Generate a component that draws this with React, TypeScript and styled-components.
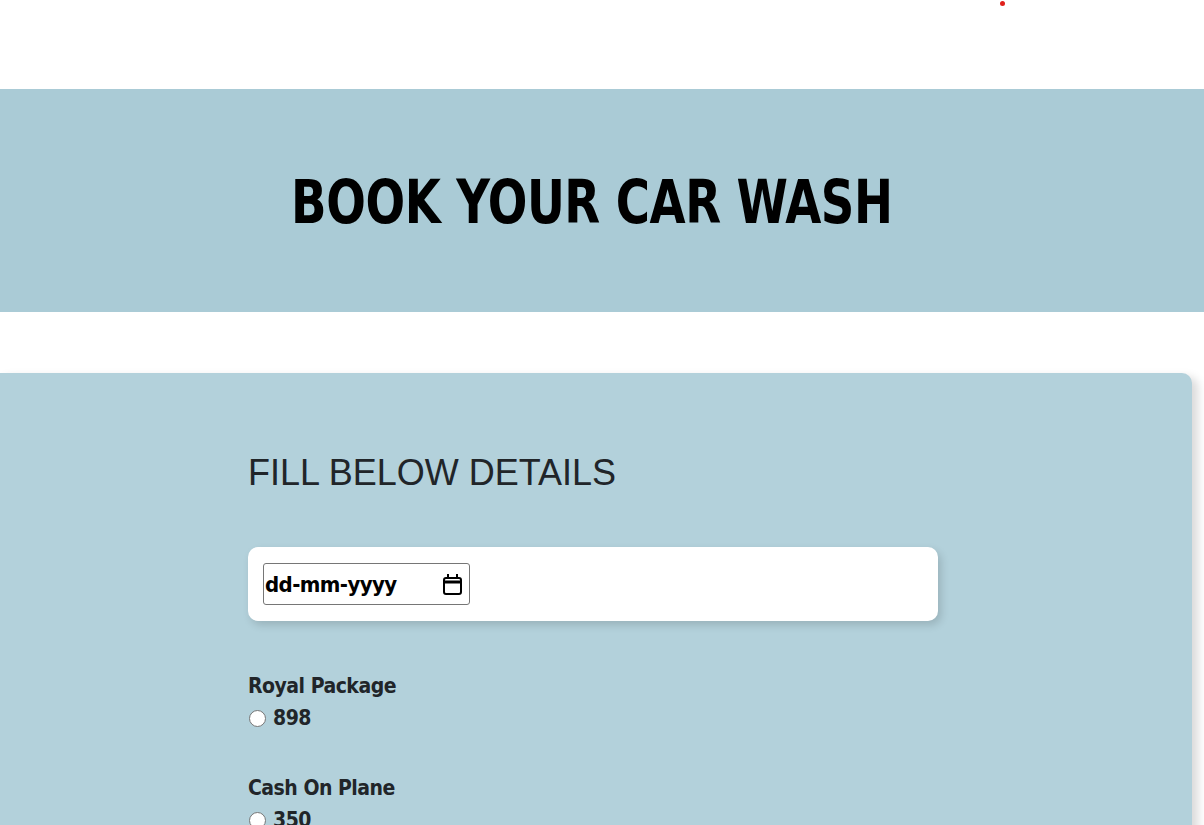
import React from "react";
import styled, { createGlobalStyle } from "styled-components";

const Global = createGlobalStyle`
  html, body { margin: 0; padding: 0; background: #fff; }
  body { font-family: "DejaVu Sans Condensed", "DejaVu Sans", sans-serif; overflow: hidden; }
`;

const TopBar = styled.div`
  height: 89px;
  display: flex;
  justify-content: flex-end;
  align-items: flex-start;
  padding-right: 199px;
  box-sizing: border-box;
`;

const Dot = styled.span`
  width: 5px;
  height: 5px;
  border-radius: 50%;
  background: #e0201b;
  margin-top: 1px;
`;

const Banner = styled.header`
  height: 223px;
  background: #aacbd6;
  display: flex;
  align-items: center;
  justify-content: center;
  padding-right: 20px;
`;

const Title = styled.h1`
  margin: 0;
  font-family: "DejaVu Sans Condensed", "DejaVu Sans", sans-serif;
  font-weight: 700;
  font-size: 61px;
  color: #000;
  letter-spacing: -0.5px;
  transform: scaleX(0.85);
  padding-top: 2px;
`;

const Panel = styled.section`
  margin-top: 61px;
  width: 1192px;
  min-height: 600px;
  background: #b3d1db;
  border-radius: 0 10px 0 0;
  box-shadow: 6px 4px 10px rgba(0, 0, 0, 0.15);
  padding: 78px 0 0 248px;
  box-sizing: border-box;
`;

const SubTitle = styled.h2`
  margin: 0 0 53px;
  font-family: "Liberation Sans", Arial, sans-serif;
  font-weight: 400;
  font-size: 36px;
  line-height: 43px;
  color: #212529;
`;

const Card = styled.div`
  width: 690px;
  height: 74px;
  box-sizing: border-box;
  padding: 15px;
  background: #fff;
  border-radius: 10px;
  box-shadow: 3px 4px 8px rgba(0, 0, 0, 0.15);
  display: flex;
  align-items: center;
`;

const DateBox = styled.div`
  width: 207px;
  height: 42px;
  box-sizing: border-box;
  border: 1px solid #767676;
  border-radius: 3px;
  display: flex;
  align-items: center;
  justify-content: space-between;
  padding: 0 7px 0 1px;
  font-family: "DejaVu Sans Condensed", "DejaVu Sans", sans-serif;
  font-weight: 700;
  font-size: 22px;
  letter-spacing: -0.6px;
  color: #000;
`;

const Group = styled.div`
  margin-top: 52px;
  color: #212529;
  font-family: "DejaVu Sans Condensed", "DejaVu Sans", sans-serif;
  font-weight: 700;
  font-size: 21px;
  line-height: 26px;
  letter-spacing: -0.5px;
  & + & { margin-top: 44px; }
`;

const OptionRow = styled.label`
  display: flex;
  align-items: center;
  gap: 7px;
  margin-top: 6px;
`;

const Radio = styled.span`
  width: 17px;
  height: 17px;
  box-sizing: border-box;
  border-radius: 50%;
  border: 1px solid #767676;
  background: #fff;
  margin-left: 1px;
`;

const CalendarIcon = () => (
  <svg width="19" height="21" viewBox="0 0 19 21" fill="none" stroke="#000" strokeWidth="2">
    <rect x="1" y="4" width="17" height="16" rx="2" />
    <line x1="1" y1="8" x2="18" y2="8" strokeWidth="3" />
    <line x1="5" y1="0" x2="5" y2="4" />
    <line x1="14" y1="0" x2="14" y2="4" />
  </svg>
);

const packages = [
  { name: "Royal Package", price: "898" },
  { name: "Cash On Plane", price: "350" },
];

export default function App() {
  return (
    <>
      <Global />
      <TopBar>
        <Dot />
      </TopBar>
      <Banner>
        <Title>BOOK YOUR CAR WASH</Title>
      </Banner>
      <Panel>
        <SubTitle>FILL BELOW DETAILS</SubTitle>
        <Card>
          <DateBox>
            <span>dd-mm-yyyy</span>
            <CalendarIcon />
          </DateBox>
        </Card>
        {packages.map((p) => (
          <Group key={p.name}>
            <div>{p.name}</div>
            <OptionRow>
              <Radio />
              <span>{p.price}</span>
            </OptionRow>
          </Group>
        ))}
      </Panel>
    </>
  );
}
